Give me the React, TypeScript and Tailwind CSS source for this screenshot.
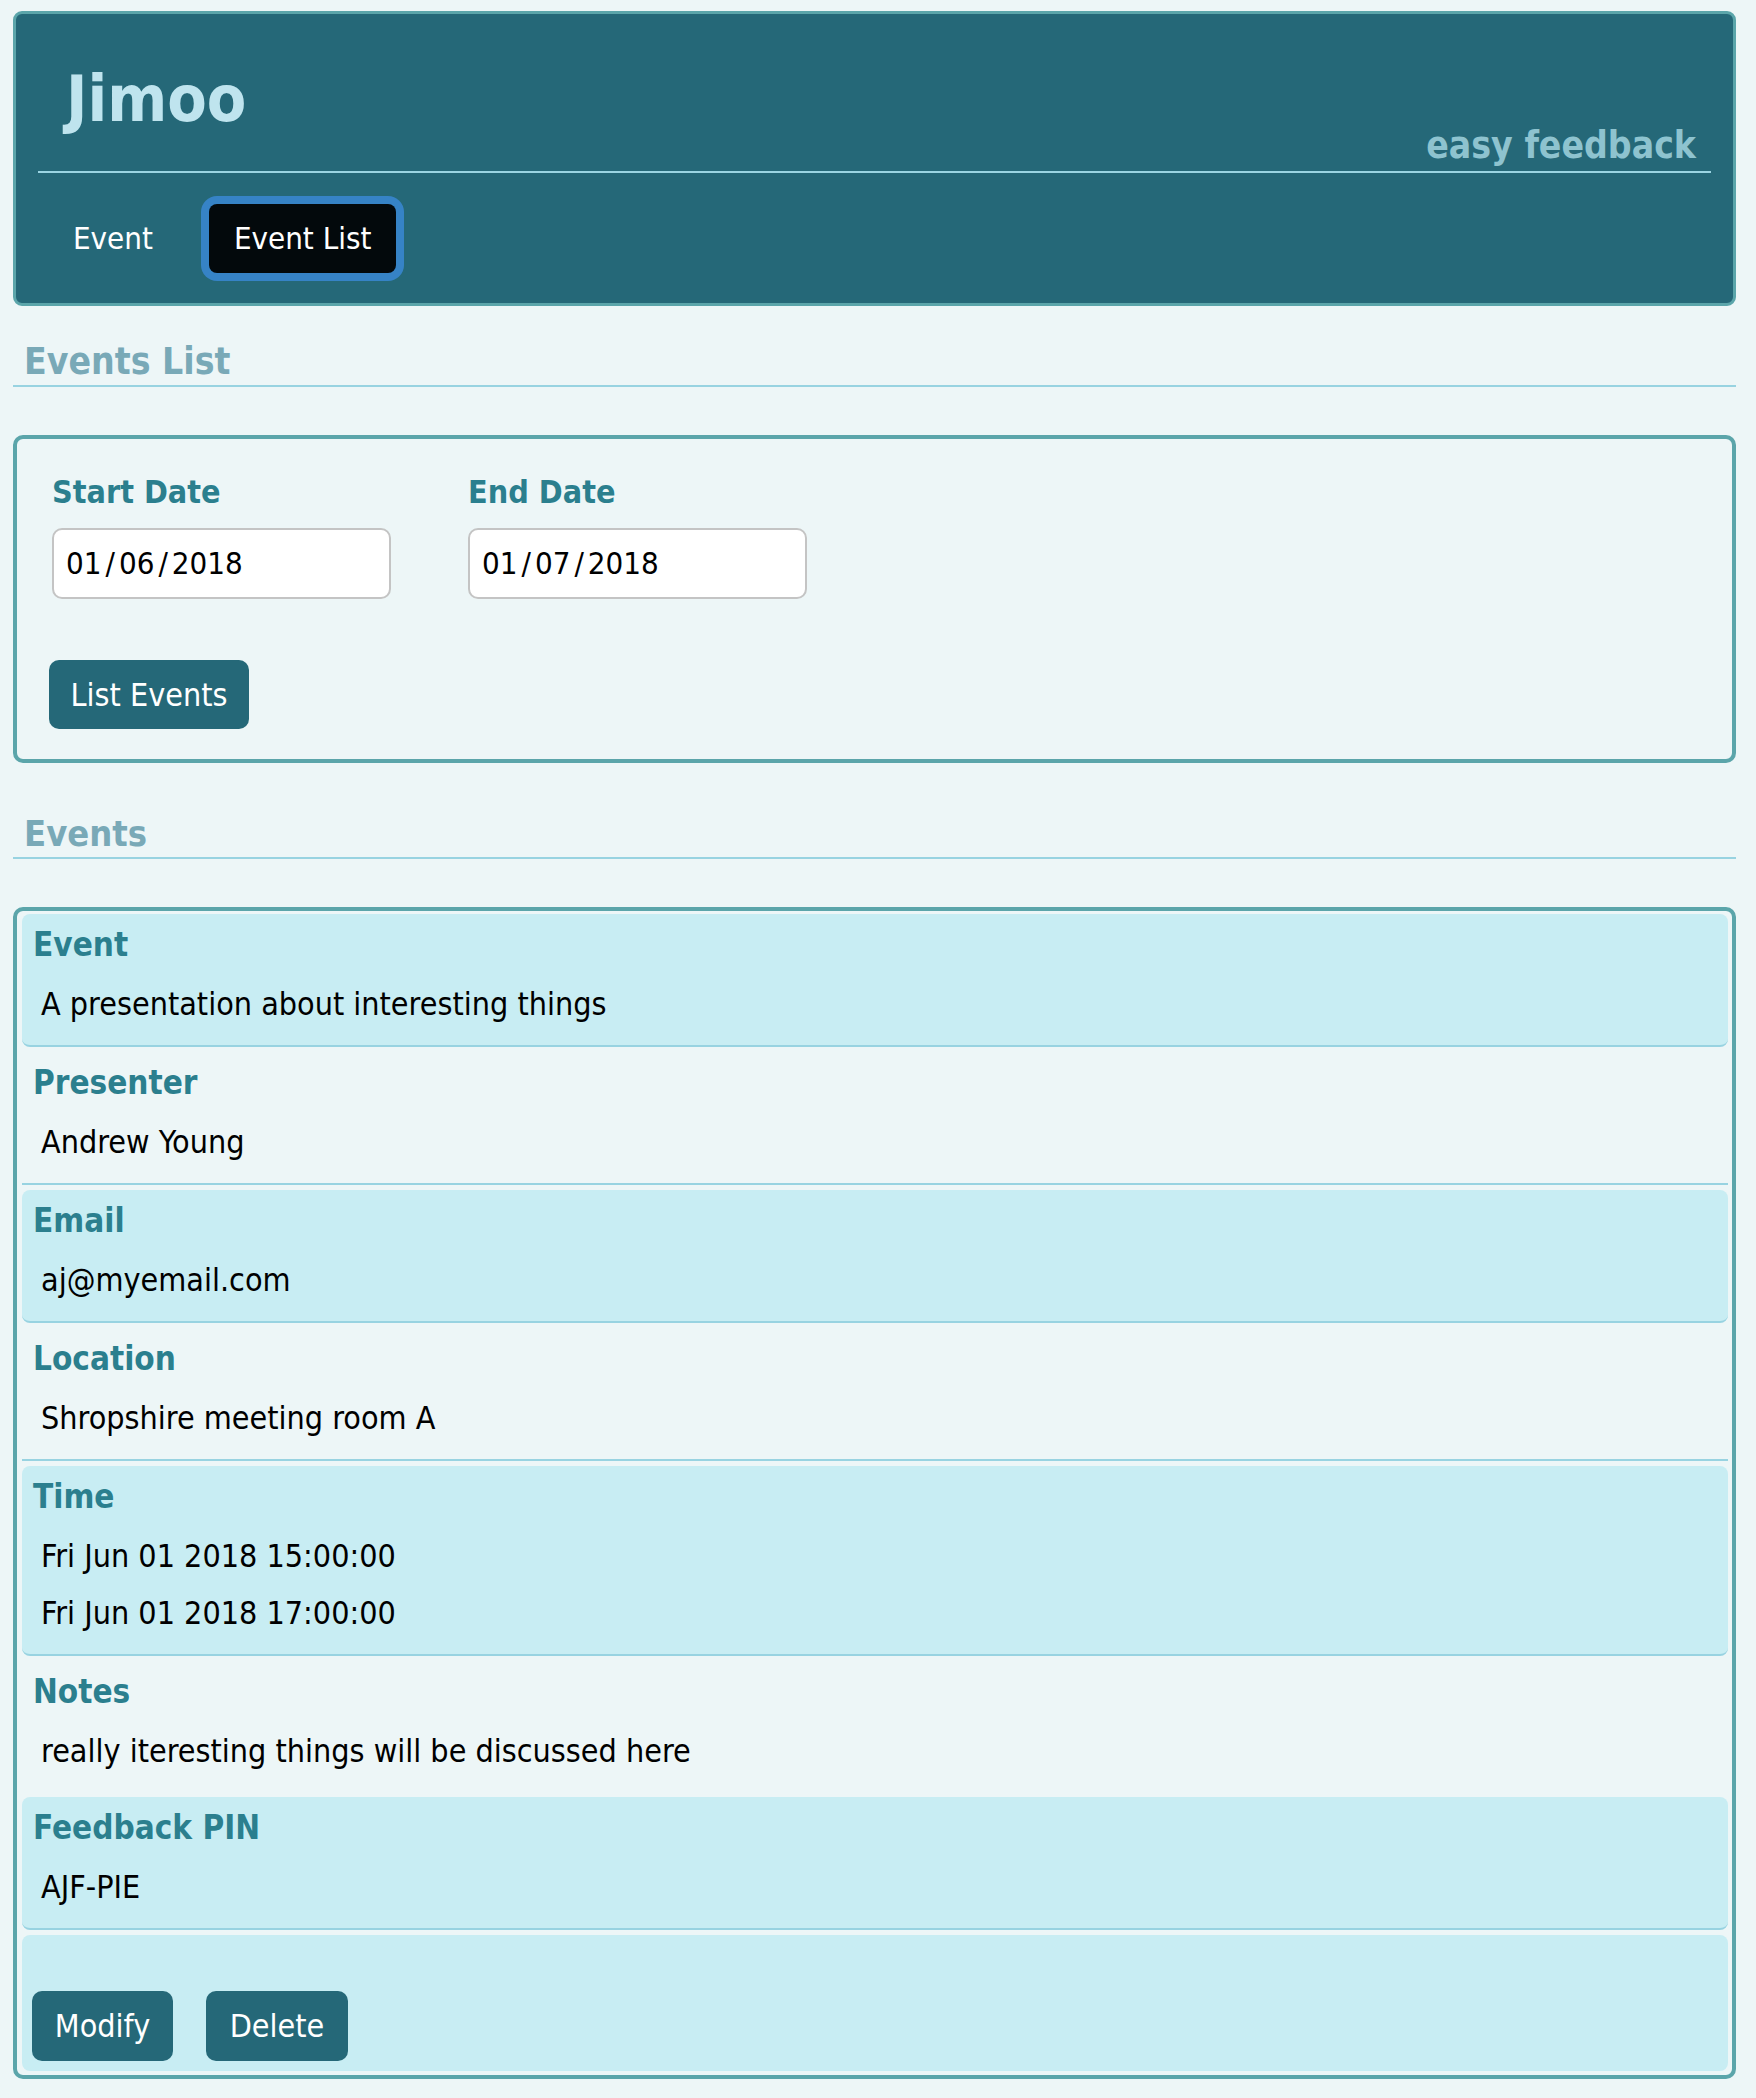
import React from "react";

const FONT = "font-['DejaVu_Sans_Condensed','DejaVu_Sans',sans-serif]";

type Field = { label: string; values: string[]; shaded: boolean; border: boolean };

const fields: Field[] = [
  { label: "Event", values: ["A presentation about interesting things"], shaded: true, border: true },
  { label: "Presenter", values: ["Andrew Young"], shaded: false, border: true },
  { label: "Email", values: ["aj@myemail.com"], shaded: true, border: true },
  { label: "Location", values: ["Shropshire meeting room A"], shaded: false, border: true },
  { label: "Time", values: ["Fri Jun 01 2018 15:00:00", "Fri Jun 01 2018 17:00:00"], shaded: true, border: true },
  { label: "Notes", values: ["really iteresting things will be discussed here"], shaded: false, border: false },
  { label: "Feedback PIN", values: ["AJF-PIE"], shaded: true, border: true },
];

function DateBox({ label, parts }: { label: string; parts: string[] }) {
  return (
    <div className="flex flex-col ml-[3px]">
      <div className="h-[32px] text-[32px] leading-[32px] font-bold text-[#2b7f8e]">{label}</div>
      <div className="mt-[20px] w-[339px] h-[71px] rounded-[10px] border-2 border-[#c4c4c4] bg-white flex items-center pl-[12px] text-[31px] text-black">
        <span>{parts[0]}</span>
        <span className="mx-[4px]">/</span>
        <span>{parts[1]}</span>
        <span className="mx-[4px]">/</span>
        <span>{parts[2]}</span>
      </div>
    </div>
  );
}

function Row({ f, first }: { f: Field; first: boolean }) {
  return (
    <div
      className={
        (first ? "" : "mt-[5px] ") +
        (f.shaded ? "bg-[#c8edf3] rounded-[8px] " : "") +
        (f.border ? "border-b-2 border-[#98d3e1] " : "") +
        "pt-[9px] pb-[12px] px-[11px]"
      }
    >
      <div className="h-[44px] text-[33px] leading-[44px] font-bold text-[#2b7f8e]">{f.label}</div>
      <div className="mt-[9px] pl-[8px]">
        {f.values.map((v) => (
          <div key={v} className="h-[57px] text-[32px] leading-[57px] text-black">
            {v}
          </div>
        ))}
      </div>
    </div>
  );
}

export default function App() {
  return (
    <div className={FONT + " min-h-[2098px] bg-[#edf6f7] pt-[11px] pl-[13px] pr-[20px] pb-[20px]"}>
      {/* Header */}
      <div className="border-[3px] border-[#5ba5aa] rounded-[9px] bg-[#256878] px-[22px] pt-[54px] pb-[30px]">
        <div className="flex items-end justify-between border-b-2 border-[#9bd5e3]">
          <div className="pl-[28px] mb-[41px] h-[62px] text-[64px] leading-[62px] font-bold text-[#bfe4ee]">Jimoo</div>
          <div className="pr-[15px] mb-[7px] h-[37px] text-[37px] leading-[37px] font-bold text-[#8ec3cf]">easy feedback</div>
        </div>
        <nav className="mt-[31px] pl-[10px] flex items-center gap-[31px]">
          <a className="h-[69px] px-[25px] flex items-center text-[31px] text-white">Event</a>
          <a className="h-[69px] px-[25px] flex items-center text-[31px] text-white bg-[#03090c] rounded-[8px] ring-[8px] ring-[#3683c6]">
            Event List
          </a>
        </nav>
      </div>

      {/* Events List heading */}
      <div className="mt-[38px] pl-[11px] pb-[5px] border-b-2 border-[#98d3e1]">
        <h2 className="h-[36px] text-[37px] leading-[36px] font-bold text-[#79a9b7]">Events List</h2>
      </div>

      {/* Filter box */}
      <div className="mt-[48px] border-4 border-[#5ba5aa] rounded-[10px] pl-[32px] pt-[37px] pb-[30px]">
        <div className="flex gap-[74px]">
          <DateBox label="Start Date" parts={["01", "06", "2018"]} />
          <DateBox label="End Date" parts={["01", "07", "2018"]} />
        </div>
        <button className="mt-[61px] w-[200px] h-[69px] rounded-[10px] bg-[#256878] text-white text-[32px] flex items-center justify-center">
          List Events
        </button>
      </div>

      {/* Events heading */}
      <div className="mt-[53px] pl-[11px] pb-[5px] border-b-2 border-[#98d3e1]">
        <h2 className="h-[36px] text-[36px] leading-[36px] font-bold text-[#79a9b7]">Events</h2>
      </div>

      {/* Event card */}
      <div className="mt-[48px] border-4 border-[#5ba5aa] rounded-[10px] pt-[3px] pl-[5px] pr-[4px] pb-[4px]">
        {fields.map((f, i) => (
          <Row key={f.label} f={f} first={i === 0} />
        ))}
        <div className="mt-[5px] bg-[#c8edf3] rounded-[8px] pt-[56px] pb-[10px] pl-[10px] flex gap-[33px]">
          <button className="w-[141px] h-[70px] rounded-[10px] bg-[#256878] text-white text-[32px] flex items-center justify-center">
            Modify
          </button>
          <button className="w-[142px] h-[70px] rounded-[10px] bg-[#256878] text-white text-[32px] flex items-center justify-center">
            Delete
          </button>
        </div>
      </div>
    </div>
  );
}
